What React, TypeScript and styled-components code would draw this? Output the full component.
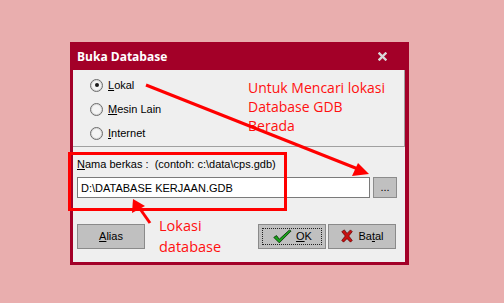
import styled, { createGlobalStyle } from 'styled-components';

const GlobalStyle = createGlobalStyle`
  html, body {
    margin: 0;
    padding: 0;
    background: #e9aeae;
  }
  body {
    font-family: 'Liberation Sans', Arial, sans-serif;
    font-size: 11px;
    color: #000;
  }
`;

const Stage = styled.div`
  position: relative;
  width: 504px;
  height: 303px;
  padding: 42px 0 0 70px;
  box-sizing: border-box;
  overflow: hidden;
`;

const Dialog = styled.div`
  width: 339px;
  height: 223px;
  box-sizing: border-box;
  background: #a30028;
  padding: 0 4px 3px 3px;
  display: flex;
  flex-direction: column;
`;

const TitleBar = styled.div`
  height: 28px;
  flex-shrink: 0;
  display: flex;
  align-items: center;
  justify-content: space-between;
  padding: 0 18px 0 4px;
  color: #fff;
  font-family: 'Open Sans', 'Noto Sans', sans-serif;
  font-weight: 700;
  font-size: 12px;
`;

const Client = styled.div`
  flex: 1;
  background: #efefef;
  display: flex;
  flex-direction: column;
`;

const TopPanel = styled.div`
  height: 77px;
  flex-shrink: 0;
  box-sizing: border-box;
  border-right: 1px solid #a0a0a0;
  border-bottom: 1px solid #a0a0a0;
  display: flex;
  padding: 8px 0 0 17px;
`;

const RadioList = styled.div`
  display: flex;
  flex-direction: column;
  gap: 10px;
  width: 158px;
`;

const RadioRow = styled.label`
  display: flex;
  align-items: center;
  gap: 5px;
  height: 14px;
`;

const RadioCircle = styled.span<{ $checked?: boolean }>`
  width: 11px;
  height: 11px;
  border-radius: 50%;
  border: 1px solid #6b6b6b;
  background: #f4f4f4;
  box-shadow: inset 0 0 0 1px #d8d8d8;
  display: flex;
  align-items: center;
  justify-content: center;
  &::after {
    content: '';
    width: 4px;
    height: 4px;
    border-radius: 50%;
    background: ${({ $checked }) => ($checked ? '#1a1a1a' : 'transparent')};
  }
`;

const Note = styled.div`
  color: #ff1010;
  font-family: 'Open Sans', 'Noto Sans', sans-serif;
  font-size: 14px;
  line-height: 19px;
`;

const FileSection = styled.div`
  flex-shrink: 0;
  padding: 10px 0 0 4px;
  display: flex;
  flex-direction: column;
  gap: 6px;
`;

const FieldLabel = styled.div`
  height: 14px;
  line-height: 14px;
  white-space: pre;
`;

const FieldRow = styled.div`
  display: flex;
  gap: 3px;
`;

const PathInput = styled.div`
  width: 293px;
  height: 21px;
  box-sizing: border-box;
  background: #fff;
  border: 1px solid #7a7a7a;
  padding: 0 3px;
  display: flex;
  align-items: center;
  font-size: 11px;
`;

const BrowseButton = styled.div`
  width: 24px;
  height: 21px;
  box-sizing: border-box;
  background: #c0c0c0;
  border: 1px solid #8c8c8c;
  display: flex;
  align-items: center;
  justify-content: center;
  padding-bottom: 2px;
`;

const ButtonRow = styled.div`
  display: flex;
  align-items: center;
  padding: 17px 9px 0 4px;
`;

const Button = styled.div<{ $focus?: boolean }>`
  width: 68px;
  height: 25px;
  box-sizing: border-box;
  background: #c0c0c0;
  border: 1px solid #8a8a8a;
  display: flex;
  align-items: center;
  justify-content: center;
  gap: 4px;
  font-size: 11px;
  position: relative;
  &::before {
    content: '';
    position: absolute;
    inset: 3px;
    border: 1px dotted ${({ $focus }) => ($focus ? '#222' : 'transparent')};
  }
`;

const NoteInline = styled(Note)`
  margin-left: 14px;
  flex: 1;
  font-size: 14.5px;
  line-height: 21px;
`;

const Buttons = styled.div`
  display: flex;
  gap: 2px;
`;

const Key = styled.span`
  text-decoration: underline;
  text-underline-offset: 1px;
`;

const Overlay = styled.svg`
  position: absolute;
  left: 0;
  top: 0;
  pointer-events: none;
`;

function CloseIcon() {
  return (
    <svg width="9" height="9" viewBox="0 0 9 9">
      <path d="M1.5 1.5 L7.5 7.5 M7.5 1.5 L1.5 7.5" stroke="#d9d9d9" strokeWidth="2.4" strokeLinecap="square" />
    </svg>
  );
}

function CheckIcon() {
  return (
    <svg width="20" height="15" viewBox="0 0 22 16">
      <path d="M2 9 L5 7 L8 11 L19 1 L21 2 L8 15 Z" fill="#19a319" stroke="#0a3d0a" strokeWidth="1" strokeLinejoin="round" />
    </svg>
  );
}

function CrossIcon() {
  return (
    <svg width="14" height="14" viewBox="0 0 16 16">
      <path d="M2 3 L5 1 L8 5 L12 1 L14 3 L10 8 L14 13 L12 15 L8 11 L4 15 L2 13 L6 8 Z" fill="#c81010" stroke="#5a0000" strokeWidth="0.8" strokeLinejoin="round" />
    </svg>
  );
}

function Annotations() {
  return (
    <Overlay width="504" height="303" viewBox="0 0 504 303">
      <rect x="69.5" y="153.5" width="216" height="56" fill="none" stroke="#ff0000" strokeWidth="3" />
      <line x1="146" y1="85" x2="358" y2="169" stroke="#ff0000" strokeWidth="3" />
      <polygon points="369,174 352,176 358,163" fill="#ff0000" />
      <line x1="150" y1="223" x2="138" y2="206" stroke="#ff0000" strokeWidth="3" />
      <polygon points="133,199 132,213 145,206" fill="#ff0000" />
    </Overlay>
  );
}

export default function App() {
  return (
    <>
      <GlobalStyle />
      <Stage>
        <Dialog>
          <TitleBar>
            <span>Buka Database</span>
            <CloseIcon />
          </TitleBar>
          <Client>
            <TopPanel>
              <RadioList>
                <RadioRow>
                  <RadioCircle $checked />
                  <span><Key>L</Key>okal</span>
                </RadioRow>
                <RadioRow>
                  <RadioCircle />
                  <span><Key>M</Key>esin Lain</span>
                </RadioRow>
                <RadioRow>
                  <RadioCircle />
                  <span><Key>I</Key>nternet</span>
                </RadioRow>
              </RadioList>
              <Note>
                Untuk Mencari lokasi
                <br />
                Database GDB
                <br />
                Berada
              </Note>
            </TopPanel>
            <FileSection>
              <FieldLabel><Key>N</Key>ama berkas :  (contoh: c:\data\cps.gdb)</FieldLabel>
              <FieldRow>
                <PathInput>D:\DATABASE KERJAAN.GDB</PathInput>
                <BrowseButton>...</BrowseButton>
              </FieldRow>
            </FileSection>
            <ButtonRow>
              <Button><span><Key>A</Key>lias</span></Button>
              <NoteInline>
                Lokasi
                <br />
                database
              </NoteInline>
              <Buttons>
                <Button $focus>
                  <CheckIcon />
                  <span><Key>O</Key>K</span>
                </Button>
                <Button>
                  <CrossIcon />
                  <span>Ba<Key>t</Key>al</span>
                </Button>
              </Buttons>
            </ButtonRow>
          </Client>
        </Dialog>
        <Annotations />
      </Stage>
    </>
  );
}
